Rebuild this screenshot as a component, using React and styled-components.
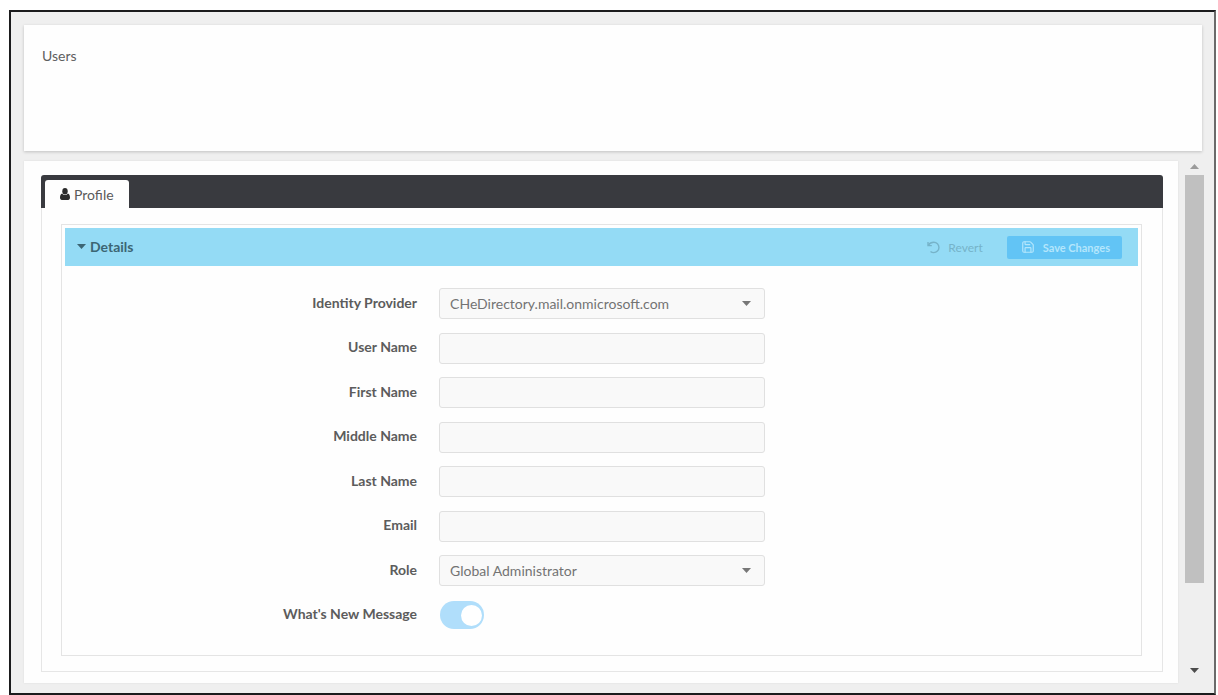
import React, { useState } from "react";
import styled, { createGlobalStyle } from "styled-components";
import { Save } from "lucide-react";

const GlobalStyle = createGlobalStyle`
    * {
        box-sizing: border-box;
    }

    body {
        margin: 0;
        background: #fff;
        color: #4d4d4d;
        font-family: Lato, "Liberation Sans", sans-serif;
        font-size: 14px;
        line-height: 20px;
    }

    button, input, select {
        font-family: inherit;
    }
`;

const Frame = styled.div`
    display: flex;
    flex-direction: column;
    gap: 10px;
    min-height: calc(100vh - 10px);
    margin: 10px 2px 0 9px;
    padding: 13px 10px 10px 13px;
    border: 2px solid #1b1b1d;
    border-right-color: #6a6a6a;
    background: #efefef;
`;

const Header = styled.header`
    min-height: 126px;
    margin-right: 2px;
    padding: 21px 18px;
    background: #fefefe;
    box-shadow: 0 1px 3px rgba(0, 0, 0, 0.2);
`;

const Title = styled.h1`
    margin: 0;
    font-size: 14px;
    font-weight: 400;
    color: #5f5f5f;
`;

const Body = styled.div`
    display: flex;
    flex: 1;
    gap: 7px;
`;

const Panel = styled.main`
    display: flex;
    flex: 1;
    flex-direction: column;
    padding: 14px 15px 11px 17px;
    background: #fefefe;
    box-shadow: 0 0 2px rgba(0, 0, 0, 0.08);
`;

const TabBar = styled.div`
    display: flex;
    align-items: flex-end;
    height: 33px;
    padding: 0 4px;
    border-radius: 3px 3px 0 0;
    background: #393a3f;
`;

const Tab = styled.button`
    display: flex;
    align-items: center;
    gap: 4px;
    height: 28px;
    padding: 0 15px;
    border: 0;
    border-radius: 3px 3px 0 0;
    background: #fefefe;
    color: #5a5a5a;
    font-size: 14px;

    svg {
        color: #2b2b2b;
    }
`;

const TabContent = styled.section`
    display: flex;
    flex: 1;
    flex-direction: column;
    padding: 16px 20px 15px 19px;
    border: 1px solid #e6e6e6;
    border-top: 0;
`;

const Details = styled.form`
    display: flex;
    flex: 1;
    flex-direction: column;
    padding: 3px;
    border: 1px solid #e4e4e4;
`;

const DetailsHeader = styled.div`
    display: flex;
    align-items: center;
    justify-content: space-between;
    height: 38px;
    padding: 0 16px 0 12px;
    background: #94dbf5;
`;

const Toggle = styled.button`
    display: flex;
    align-items: center;
    gap: 4px;
    padding: 0 0 2px;
    border: 0;
    background: none;
    color: #3c6674;
    font-size: 14px;
    font-weight: 700;
`;

const Actions = styled.div`
    display: flex;
    align-items: center;
    gap: 12px;
`;

const ActionButton = styled.button`
    display: flex;
    align-items: center;
    gap: 8px;
    height: 23px;
    padding: 0 12px 0 14px;
    border: 0;
    border-radius: 2px;
    background: ${(props) => (props.$primary ? "#62c4f5" : "transparent")};
    color: ${(props) => (props.$primary ? "#b4e6fc" : "#76b3c9")};
    font-size: ${(props) => (props.$primary ? "11px" : "12px")};
    font-weight: ${(props) => (props.$primary ? 700 : 400)};
`;

const Fields = styled.div`
    display: flex;
    flex: 1;
    flex-direction: column;
    justify-content: space-between;
    gap: 8px;
    padding: 22px 0 21px;
`;

const Row = styled.div`
    display: grid;
    grid-template-columns: 33% minmax(180px, 326px);
    align-items: center;
    column-gap: 20px;
    min-height: 31px;
`;

const Label = styled.label`
    padding: 0 2px 2px 0;
    color: #5c5c5c;
    font-weight: 700;
    text-align: right;
`;

const Input = styled.input`
    width: 100%;
    height: 31px;
    padding: 0 10px;
    border: 1px solid #e0e0e0;
    border-radius: 3px;
    background: #f9f9f9;
    color: #737373;
    font-size: 14px;
`;

const SelectWrap = styled.div`
    position: relative;
`;

const Select = styled(Input).attrs({ as: "select" })`
    appearance: none;
`;

const SelectCaret = styled.span`
    position: absolute;
    top: 0;
    right: 14px;
    display: flex;
    align-items: center;
    height: 100%;
    color: #777;
    pointer-events: none;
`;

const Switch = styled.input`
    appearance: none;
    display: flex;
    justify-content: flex-start;
    align-items: center;
    width: 44px;
    height: 28px;
    margin: 0 0 0 1px;
    padding: 0 2px;
    border-radius: 14px;
    background: #ddd;

    &::before {
        content: "";
        width: 21px;
        height: 21px;
        border-radius: 50%;
        background: #fff;
    }

    &:checked {
        justify-content: flex-end;
        background: #b0defb;
    }
`;

const Scrollbar = styled.div`
    display: flex;
    flex-direction: column;
    align-items: center;
    width: 19px;
`;

const ScrollArrow = styled.button`
    display: flex;
    align-items: center;
    justify-content: center;
    width: 100%;
    height: ${(props) => (props.$down ? "22px" : "14px")};
    padding: 0 0 4px;
    border: 0;
    background: none;
    color: ${(props) => (props.$down ? "#4c4c4c" : "#9b9b9b")};
`;

const Track = styled.div`
    flex: 1;
    width: 100%;
`;

const Thumb = styled.div`
    height: 84%;
    background: #c0c0c0;
`;

const Caret = ({ up }) => (
    <svg width="9" height="5" viewBox="0 0 9 5" fill="currentColor" aria-hidden="true">
        <path d={up ? "M0 5 4.5 0 9 5Z" : "M0 0h9L4.5 5Z"} />
    </svg>
);

const UserIcon = () => (
    <svg width="10" height="12" viewBox="0 0 10 12" fill="currentColor" aria-hidden="true">
        <ellipse cx="5" cy="3.2" rx="2.7" ry="3.2" />
        <path d="M2.2 5.4C3 6.6 4 7 5 7s2-.4 2.8-1.6C9.4 5.8 10 7.6 10 9.8 10 11 9.2 12 8.2 12H1.8C.8 12 0 11 0 9.8c0-2.2.6-4 2.2-4.4Z" />
    </svg>
);

const UndoIcon = () => (
    <svg width="13" height="13" viewBox="0 0 13 13" fill="none" stroke="currentColor" strokeWidth="1.4" aria-hidden="true">
        <path d="M1 1v3.6h3.8" />
        <path d="M1.4 4.2C2.6 2.2 4.6 1.3 6.8 1.3a5.1 5.1 0 0 1 0 10.3c-1.3 0-2.4-.4-3.3-1.2" />
    </svg>
);

const fields = [
    { id: "provider", label: "Identity Provider", option: "CHeDirectory.mail.onmicrosoft.com" },
    { id: "userName", label: "User Name" },
    { id: "firstName", label: "First Name" },
    { id: "middleName", label: "Middle Name" },
    { id: "lastName", label: "Last Name" },
    { id: "email", label: "Email" },
    { id: "role", label: "Role", option: "Global Administrator" },
];

function Field({ id, label, option }) {
    return (
        <Row>
            <Label htmlFor={id}>{label}</Label>
            {option ? (
                <SelectWrap>
                    <Select id={id}>
                        <option>{option}</option>
                    </Select>
                    <SelectCaret>
                        <Caret />
                    </SelectCaret>
                </SelectWrap>
            ) : (
                <Input id={id} type="text" />
            )}
        </Row>
    );
}

function App() {
    const [open, setOpen] = useState(true);

    return (
        <>
            <GlobalStyle />
            <Frame>
                <Header>
                    <Title>Users</Title>
                </Header>
                <Body>
                    <Panel>
                        <TabBar role="tablist">
                            <Tab type="button" role="tab" aria-selected="true">
                                <UserIcon />
                                Profile
                            </Tab>
                        </TabBar>
                        <TabContent>
                            <Details onSubmit={(e) => e.preventDefault()}>
                                <DetailsHeader>
                                    <Toggle type="button" aria-expanded={open} onClick={() => setOpen(!open)}>
                                        <Caret up={!open} />
                                        Details
                                    </Toggle>
                                    <Actions>
                                        <ActionButton type="reset" disabled>
                                            <UndoIcon />
                                            Revert
                                        </ActionButton>
                                        <ActionButton type="submit" $primary disabled>
                                            <Save size={14} strokeWidth={2} />
                                            Save Changes
                                        </ActionButton>
                                    </Actions>
                                </DetailsHeader>
                                {open && (
                                    <Fields>
                                        {fields.map((field) => (
                                            <Field key={field.id} {...field} />
                                        ))}
                                        <Row>
                                            <Label htmlFor="whatsNew">What's New Message</Label>
                                            <Switch id="whatsNew" type="checkbox" defaultChecked />
                                        </Row>
                                    </Fields>
                                )}
                            </Details>
                        </TabContent>
                    </Panel>
                    <Scrollbar>
                        <ScrollArrow type="button" aria-label="Scroll up">
                            <Caret up />
                        </ScrollArrow>
                        <Track>
                            <Thumb />
                        </Track>
                        <ScrollArrow type="button" $down aria-label="Scroll down">
                            <Caret />
                        </ScrollArrow>
                    </Scrollbar>
                </Body>
            </Frame>
        </>
    );
}

export default App;
